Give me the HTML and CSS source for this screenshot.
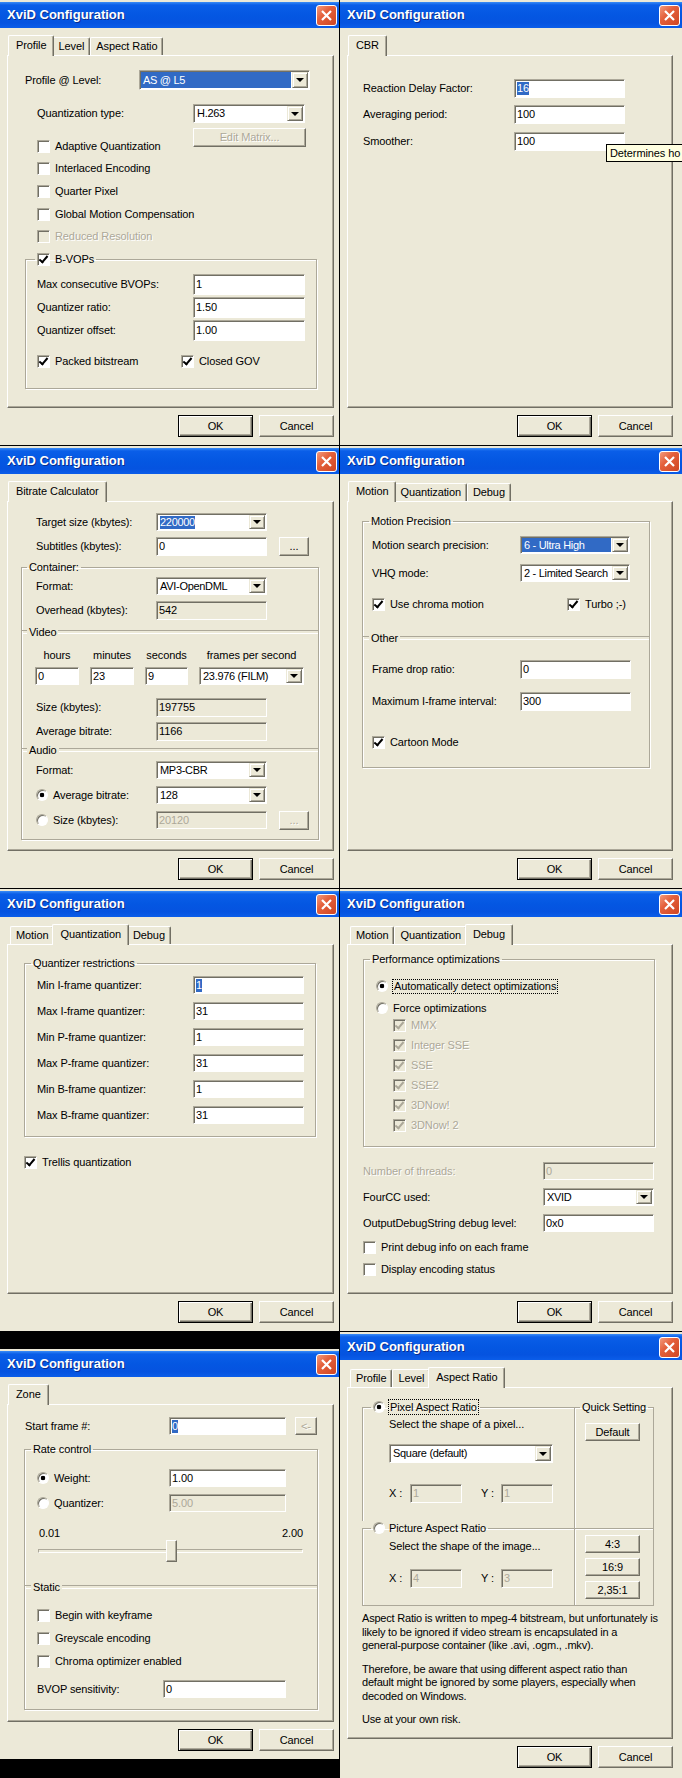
FILE: index.html
```html
<!DOCTYPE html>
<html lang="en">
<head>
    <meta charset="UTF-8">
    <title>XviD Configuration</title>
    <link rel="stylesheet" href="styles.css">
</head>
<body>
<div class="screen">

    <!-- Profile / Level / Aspect Ratio -->
    <div class="win w-profile">
        <div class="title"><span>XviD Configuration</span><span class="close"><svg width="19" height="19" viewBox="0 0 19 19"><path d="M5 5L14 14M14 5L5 14" stroke="#fff" stroke-width="2.2"/></svg></span></div>
        <div class="tabs"><span class="tab on">Profile</span><span class="tab">Level</span><span class="tab">Aspect Ratio</span></div>
        <div class="page">
            <div class="row p-level"><span class="lbl">Profile @ Level:</span><span class="combo hl"><span class="val">AS @ L5</span><span class="drop"></span></span></div>
            <div class="row p-quant"><span class="lbl">Quantization type:</span><span class="combo"><span class="val">H.263</span><span class="drop"></span></span></div>
            <div class="row p-matrix"><span class="chk"><span class="box"></span>Adaptive Quantization</span><span class="btn dis">Edit Matrix...</span></div>
            <div class="chk p-opt tight"><span class="box"></span>Interlaced Encoding</div>
            <div class="chk p-opt"><span class="box"></span>Quarter Pixel</div>
            <div class="chk p-opt"><span class="box"></span>Global Motion Compensation</div>
            <div class="chk p-opt tight dis"><span class="box"></span>Reduced Resolution</div>
            <fieldset class="grp p-bvop">
                <legend><span class="chk"><span class="box on"></span>B-VOPs</span></legend>
                <div class="row p-num first"><span class="lbl">Max consecutive BVOPs:</span><span class="edit">1</span></div>
                <div class="row p-num"><span class="lbl">Quantizer ratio:</span><span class="edit">1.50</span></div>
                <div class="row p-num"><span class="lbl">Quantizer offset:</span><span class="edit">1.00</span></div>
                <div class="row p-pack"><span class="chk"><span class="box on"></span>Packed bitstream</span><span class="chk"><span class="box on"></span>Closed GOV</span></div>
            </fieldset>
        </div>
        <div class="actions"><span class="btn def">OK</span><span class="btn">Cancel</span></div>
    </div>

    <!-- CBR -->
    <div class="win r w-cbr">
        <div class="title"><span>XviD Configuration</span><span class="close"><svg width="19" height="19" viewBox="0 0 19 19"><path d="M5 5L14 14M14 5L5 14" stroke="#fff" stroke-width="2.2"/></svg></span></div>
        <div class="tabs"><span class="tab on">CBR</span></div>
        <div class="page">
            <div class="row c-row first"><span class="lbl">Reaction Delay Factor:</span><span class="edit"><span class="sel">16</span></span></div>
            <div class="row c-row"><span class="lbl">Averaging period:</span><span class="edit">100</span></div>
            <div class="row c-row third"><span class="lbl">Smoother:</span><span class="edit">100</span></div>
        </div>
        <div class="actions"><span class="btn def">OK</span><span class="btn">Cancel</span></div>
        <div class="tip">Determines ho</div>
    </div>

    <!-- Bitrate Calculator -->
    <div class="win w-calc">
        <div class="title"><span>XviD Configuration</span><span class="close"><svg width="19" height="19" viewBox="0 0 19 19"><path d="M5 5L14 14M14 5L5 14" stroke="#fff" stroke-width="2.2"/></svg></span></div>
        <div class="tabs"><span class="tab on">Bitrate Calculator</span></div>
        <div class="page">
            <div class="row b-row b-target"><span class="lbl">Target size (kbytes):</span><span class="combo"><span class="val"><span class="sel">220000</span></span><span class="drop"></span></span></div>
            <div class="row b-row b-sub"><span class="lbl">Subtitles (kbytes):</span><span class="edit">0</span><span class="btn more">...</span></div>
            <fieldset class="grp b-box">
                <legend>Container:</legend>
                <div class="row b-in b-fmt"><span class="lbl">Format:</span><span class="combo"><span class="val">AVI-OpenDML</span><span class="drop"></span></span></div>
                <div class="row b-in b-over"><span class="lbl">Overhead (kbytes):</span><span class="edit ro">542</span></div>
                <div class="sep b-video"><span>Video</span></div>
                <div class="b-time">
                    <span>hours</span><span>minutes</span><span>seconds</span><span>frames per second</span>
                    <span class="edit">0</span><span class="edit">23</span><span class="edit">9</span>
                    <span class="combo"><span class="val">23.976 (FILM)</span><span class="drop"></span></span>
                </div>
                <div class="row b-in b-size"><span class="lbl">Size (kbytes):</span><span class="edit ro">197755</span></div>
                <div class="row b-in b-avg"><span class="lbl">Average bitrate:</span><span class="edit ro">1166</span></div>
                <div class="sep b-audio"><span>Audio</span></div>
                <div class="row b-in b-afmt"><span class="lbl">Format:</span><span class="combo"><span class="val">MP3-CBR</span><span class="drop"></span></span></div>
                <div class="row b-in b-rad"><span class="opt lbl"><span class="radio on"></span>Average bitrate:</span><span class="combo"><span class="val">128</span><span class="drop"></span></span></div>
                <div class="row b-in b-rad"><span class="opt lbl"><span class="radio"></span>Size (kbytes):</span><span class="edit dis">20120</span><span class="btn more dis">...</span></div>
            </fieldset>
        </div>
        <div class="actions"><span class="btn def">OK</span><span class="btn">Cancel</span></div>
    </div>

    <!-- Motion -->
    <div class="win r w-motion">
        <div class="title"><span>XviD Configuration</span><span class="close"><svg width="19" height="19" viewBox="0 0 19 19"><path d="M5 5L14 14M14 5L5 14" stroke="#fff" stroke-width="2.2"/></svg></span></div>
        <div class="tabs"><span class="tab on">Motion</span><span class="tab">Quantization</span><span class="tab">Debug</span></div>
        <div class="page">
            <fieldset class="grp m-box">
                <legend>Motion Precision</legend>
                <div class="row m-row m-prec"><span class="lbl">Motion search precision:</span><span class="combo hl"><span class="val">6 - Ultra High</span><span class="drop"></span></span></div>
                <div class="row m-row m-vhq"><span class="lbl">VHQ mode:</span><span class="combo"><span class="val">2 - Limited Search</span><span class="drop"></span></span></div>
                <div class="row m-row m-chk"><span class="chk"><span class="box on"></span>Use chroma motion</span><span class="chk"><span class="box on"></span>Turbo ;-)</span></div>
                <div class="sep m-other"><span>Other</span></div>
                <div class="row m-row m-drop"><span class="lbl">Frame drop ratio:</span><span class="edit">0</span></div>
                <div class="row m-row m-max"><span class="lbl">Maximum I-frame interval:</span><span class="edit">300</span></div>
                <div class="chk m-row m-cart"><span class="box on"></span>Cartoon Mode</div>
            </fieldset>
        </div>
        <div class="actions"><span class="btn def">OK</span><span class="btn">Cancel</span></div>
    </div>

    <!-- Quantization -->
    <div class="win w-quant">
        <div class="title"><span>XviD Configuration</span><span class="close"><svg width="19" height="19" viewBox="0 0 19 19"><path d="M5 5L14 14M14 5L5 14" stroke="#fff" stroke-width="2.2"/></svg></span></div>
        <div class="tabs"><span class="tab">Motion</span><span class="tab on">Quantization</span><span class="tab">Debug</span></div>
        <div class="page">
            <fieldset class="grp q-box">
                <legend>Quantizer restrictions</legend>
                <div class="row q-row first"><span class="lbl">Min I-frame quantizer:</span><span class="edit"><span class="sel">1</span></span></div>
                <div class="row q-row"><span class="lbl">Max I-frame quantizer:</span><span class="edit">31</span></div>
                <div class="row q-row"><span class="lbl">Min P-frame quantizer:</span><span class="edit">1</span></div>
                <div class="row q-row"><span class="lbl">Max P-frame quantizer:</span><span class="edit">31</span></div>
                <div class="row q-row"><span class="lbl">Min B-frame quantizer:</span><span class="edit">1</span></div>
                <div class="row q-row"><span class="lbl">Max B-frame quantizer:</span><span class="edit">31</span></div>
            </fieldset>
            <div class="chk q-trellis"><span class="box on"></span>Trellis quantization</div>
        </div>
        <div class="actions"><span class="btn def">OK</span><span class="btn">Cancel</span></div>
    </div>

    <!-- Debug -->
    <div class="win r w-debug">
        <div class="title"><span>XviD Configuration</span><span class="close"><svg width="19" height="19" viewBox="0 0 19 19"><path d="M5 5L14 14M14 5L5 14" stroke="#fff" stroke-width="2.2"/></svg></span></div>
        <div class="tabs"><span class="tab">Motion</span><span class="tab">Quantization</span><span class="tab on">Debug</span></div>
        <div class="page">
            <fieldset class="grp d-box">
                <legend>Performance optimizations</legend>
                <div class="opt d-auto"><span class="radio on"></span><span class="focus">Automatically detect optimizations</span></div>
                <div class="opt d-force"><span class="radio"></span>Force optimizations</div>
                <div class="chk dis d-cpu first"><span class="box on"></span>MMX</div>
                <div class="chk dis d-cpu"><span class="box on"></span>Integer SSE</div>
                <div class="chk dis d-cpu"><span class="box on"></span>SSE</div>
                <div class="chk dis d-cpu"><span class="box on"></span>SSE2</div>
                <div class="chk dis d-cpu"><span class="box on"></span>3DNow!</div>
                <div class="chk dis d-cpu"><span class="box on"></span>3DNow! 2</div>
            </fieldset>
            <div class="row d-row d-threads"><span class="lbl dis">Number of threads:</span><span class="edit dis">0</span></div>
            <div class="row d-row d-fourcc"><span class="lbl">FourCC used:</span><span class="combo"><span class="val">XVID</span><span class="drop"></span></span></div>
            <div class="row d-row d-level"><span class="lbl">OutputDebugString debug level:</span><span class="edit">0x0</span></div>
            <div class="chk d-row d-print"><span class="box"></span>Print debug info on each frame</div>
            <div class="chk d-row d-status"><span class="box"></span>Display encoding status</div>
        </div>
        <div class="actions"><span class="btn def">OK</span><span class="btn">Cancel</span></div>
    </div>

    <!-- Zone -->
    <div class="win zone w-zone">
        <div class="title"><span>XviD Configuration</span><span class="close"><svg width="19" height="19" viewBox="0 0 19 19"><path d="M5 5L14 14M14 5L5 14" stroke="#fff" stroke-width="2.2"/></svg></span></div>
        <div class="tabs"><span class="tab on">Zone</span></div>
        <div class="page">
            <div class="row z-start"><span class="lbl">Start frame #:</span><span class="edit"><span class="sel">0</span></span><span class="btn dis z-arrow">&lt;-</span></div>
            <fieldset class="grp z-box">
                <legend>Rate control</legend>
                <div class="row z-row z-weight"><span class="opt lbl"><span class="radio on"></span>Weight:</span><span class="edit">1.00</span></div>
                <div class="row z-row z-qz"><span class="opt lbl"><span class="radio"></span>Quantizer:</span><span class="edit dis">5.00</span></div>
                <div class="z-scale"><span>0.01</span><span>2.00</span></div>
                <div class="slider"><span class="track"></span><span class="thumb"></span></div>
                <div class="sep z-static"><span>Static</span></div>
                <div class="chk z-chk first"><span class="box"></span>Begin with keyframe</div>
                <div class="chk z-chk"><span class="box"></span>Greyscale encoding</div>
                <div class="chk z-chk"><span class="box"></span>Chroma optimizer enabled</div>
                <div class="row z-row z-bvop"><span class="lbl">BVOP sensitivity:</span><span class="edit">0</span></div>
            </fieldset>
        </div>
        <div class="actions"><span class="btn def">OK</span><span class="btn">Cancel</span></div>
    </div>

    <!-- Aspect Ratio -->
    <div class="win r w-aspect">
        <div class="title"><span>XviD Configuration</span><span class="close"><svg width="19" height="19" viewBox="0 0 19 19"><path d="M5 5L14 14M14 5L5 14" stroke="#fff" stroke-width="2.2"/></svg></span></div>
        <div class="tabs"><span class="tab">Profile</span><span class="tab">Level</span><span class="tab on">Aspect Ratio</span></div>
        <div class="page">
            <div class="ar">
                <div class="ar-left">
                    <fieldset class="grp ar-pix">
                        <legend><span class="opt"><span class="radio on"></span><span class="focus">Pixel Aspect Ratio</span></span></legend>
                        <div class="ar-hint">Select the shape of a pixel...</div>
                        <div class="row ar-combo"><span class="combo"><span class="val">Square (default)</span><span class="drop"></span></span></div>
                        <div class="row ar-xy"><span class="lbl">X :</span><span class="edit dis">1</span><span class="lbl ar-y">Y :</span><span class="edit dis">1</span></div>
                    </fieldset>
                    <fieldset class="grp ar-pic">
                        <legend><span class="opt"><span class="radio"></span>Picture Aspect Ratio</span></legend>
                        <div class="ar-hint pic">Select the shape of the image...</div>
                        <div class="row ar-xy pic"><span class="lbl">X :</span><span class="edit dis">4</span><span class="lbl ar-y">Y :</span><span class="edit dis">3</span></div>
                    </fieldset>
                </div>
                <fieldset class="grp ar-quick">
                    <legend>Quick Setting</legend>
                    <span class="btn ar-btn ar-def">Default</span>
                    <div class="ar-line"></div>
                    <span class="btn ar-btn">4:3</span>
                    <span class="btn ar-btn">16:9</span>
                    <span class="btn ar-btn">2,35:1</span>
                </fieldset>
            </div>
            <p class="note">Aspect Ratio is written to mpeg-4 bitstream, but unfortunately is<br>likely to be ignored if video stream is encapsulated in a<br>general-purpose container (like .avi, .ogm., .mkv).</p>
            <p class="note">Therefore, be aware that using different aspect ratio than<br>default might be ignored by some players, especially when<br>decoded on Windows.</p>
            <p class="note">Use at your own risk.</p>
        </div>
        <div class="actions"><span class="btn def">OK</span><span class="btn">Cancel</span></div>
    </div>

</div>
</body>
</html>
```

FILE: styles.css
```css
* {
    box-sizing: border-box;
}
body {
    margin: 0;
    background: #000;
    color: #000;
    font: 11px/13px "Liberation Sans", Arial, sans-serif;
    letter-spacing: -0.1px;
}
.screen {
    display: grid;
    grid-template-columns: 339px 342px;
    grid-template-rows: 445px 442px 442px 446px;
    gap: 1px;
    width: 682px;
    height: 1778px;
}

/* window chrome */
.win {
    --pr: 5px;
    position: relative;
    display: flex;
    flex-direction: column;
    padding: 0 var(--pr) 0 7px;
    background: #ECE9D8;
    overflow: hidden;
}
.win.r {
    --pr: 9px;
}
.win.zone {
    align-self: start;
    height: 410px;
    margin-top: 17px;
}
.title {
    flex: none;
    height: 26px;
    margin: 2px calc(-1 * var(--pr)) 0 -7px;
    padding: 0 2px 0 7px;
    display: flex;
    align-items: center;
    justify-content: space-between;
    background: linear-gradient(#3a8cf6 0, #0a5ee8 3px, #0457e2 50%, #0553e0 80%, #0b5de9 100%);
    color: #fff;
    font: bold 13px/16px "Liberation Sans", Arial, sans-serif;
    letter-spacing: 0;
    text-shadow: 1px 1px 0 #0c2d8c;
}
.close {
    width: 21px;
    height: 21px;
    display: flex;
    align-items: center;
    justify-content: center;
    border: 1px solid #fff;
    border-radius: 3px;
    background: linear-gradient(135deg, #f29a7c 0%, #e4603b 40%, #cf4623 100%);
}

/* tabs */
.tabs {
    flex: none;
    display: flex;
    align-items: flex-end;
    height: 20px;
    margin-top: 7px;
    padding-left: 3px;
}
.tab {
    height: 18px;
    padding: 0 5px 0 5px;
    line-height: 17px;
    white-space: nowrap;
    border: 1px solid;
    border-bottom: 0;
    border-color: #fff #716F64 #fff #fff;
    border-radius: 2px 2px 0 0;
    box-shadow: inset -1px 0 0 #ACA899;
}
.tab.on {
    position: relative;
    z-index: 1;
    height: 21px;
    margin: 0 -2px -1px;
    padding: 0 7px 0 7px;
    line-height: 19px;
    background: #ECE9D8;
}
.page {
    flex: 1;
    display: flex;
    flex-direction: column;
    align-items: flex-start;
    border: 1px solid;
    border-color: #fff #716F64 #716F64 #fff;
    box-shadow: inset -1px -1px 0 #ACA899;
}
.actions {
    flex: none;
    display: flex;
    justify-content: flex-end;
    gap: 6px;
    margin-top: 7px;
    padding-bottom: 8px;
}
.w-aspect .actions {
    padding-bottom: 10px;
}

/* controls */
.btn {
    flex: none;
    width: 75px;
    height: 22px;
    display: flex;
    align-items: center;
    justify-content: center;
    white-space: nowrap;
    border: 1px solid;
    border-color: #fff #716F64 #716F64 #fff;
    box-shadow: inset -1px -1px 0 #ACA899;
}
.btn.def {
    border-color: #000;
    box-shadow: inset 1px 1px 0 #fff, inset -1px -1px 0 #716F64, inset -2px -2px 0 #ACA899;
}
.dis {
    color: #ACA899;
    text-shadow: 1px 1px 0 #fff;
}
.row {
    flex: none;
    display: flex;
    align-items: center;
    height: 18px;
}
.lbl {
    flex: none;
    white-space: nowrap;
}
.edit,
.combo {
    align-self: stretch;
    display: flex;
    align-items: center;
    background: #fff;
    white-space: nowrap;
    overflow: hidden;
    border: 1px solid;
    border-color: #ACA899 #fff #fff #ACA899;
    box-shadow: inset 1px 1px 0 #716F64;
}
.edit {
    padding-left: 2px;
}
.edit.ro {
    background: #ECE9D8;
}
.edit.dis {
    background: #ECE9D8;
    text-shadow: none;
}
.combo .val {
    flex: 1;
    min-width: 0;
    align-self: stretch;
    display: flex;
    align-items: center;
    margin: 1px 0 1px 1px;
    padding-left: 2px;
    letter-spacing: -0.3px;
    overflow: hidden;
}
.combo.hl .val {
    background: #316AC5;
    color: #fff;
}
.sel {
    background: #316AC5;
    color: #fff;
}
.drop {
    flex: none;
    width: 16px;
    align-self: stretch;
    margin: 1px;
    display: flex;
    align-items: center;
    justify-content: center;
    background: #ECE9D8;
    border: 1px solid;
    border-color: #ECE9D8 #716F64 #716F64 #ECE9D8;
    box-shadow: inset 1px 1px 0 #fff, inset -1px -1px 0 #ACA899;
}
.drop::after {
    content: "";
    border-left: 4px solid transparent;
    border-right: 4px solid transparent;
    border-top: 4px solid #000;
}
.chk,
.opt {
    flex: none;
    display: flex;
    align-items: center;
    gap: 5px;
    height: 16px;
    white-space: nowrap;
}
.box {
    flex: none;
    width: 13px;
    height: 13px;
    display: flex;
    align-items: center;
    justify-content: center;
    background: #fff;
    border: 1px solid;
    border-color: #ACA899 #fff #fff #ACA899;
    box-shadow: inset 1px 1px 0 #716F64;
}
.box.on::after {
    content: "";
    width: 3px;
    height: 7px;
    margin-top: -2px;
    border: solid #000;
    border-width: 0 2px 2px 0;
    transform: rotate(40deg);
}
.chk.dis .box {
    background: #ECE9D8;
}
.chk.dis .box.on::after {
    border-color: #ACA899;
}
.radio {
    flex: none;
    width: 12px;
    height: 12px;
    border-radius: 50%;
    background: #fff;
    border: 1px solid;
    border-color: #ACA899 #fff #fff #ACA899;
    box-shadow: inset 1px 1px 0 #716F64;
}
.radio.on {
    background: radial-gradient(circle, #000 0 2px, #fff 2.6px);
}
.focus {
    padding: 0 1px;
    outline: 1px dotted #000;
}

/* group boxes */
.grp {
    flex: none;
    display: flex;
    flex-direction: column;
    align-items: flex-start;
    min-width: 0;
    margin: 0;
    padding: 0;
    border: 1px solid #ACA899;
    box-shadow: inset 1px 1px 0 #fff, 1px 1px 0 #fff;
}
.grp legend {
    margin-left: 6px;
    padding: 0 2px;
    line-height: 14px;
}
.sep {
    --lead: 6px;
    flex: none;
    align-self: stretch;
    display: flex;
    align-items: center;
    height: 14px;
}
.sep::before,
.sep::after {
    content: "";
    height: 2px;
    border-top: 1px solid #ACA899;
    border-bottom: 1px solid #fff;
}
.sep::before {
    width: var(--lead);
}
.sep::after {
    flex: 1;
}
.sep span {
    padding: 0 2px;
}

.tip {
    position: absolute;
    left: 266px;
    top: 144px;
    height: 18px;
    padding: 0 3px;
    line-height: 16px;
    white-space: nowrap;
    background: #FFFFE1;
    border: 1px solid #000;
    border-right: 0;
}

/* profile */
.p-level {
    height: 20px;
    margin: 14px 0 0 17px;
}
.p-level .lbl {
    width: 114px;
}
.p-level .combo {
    width: 171px;
}
.p-quant {
    height: 19px;
    margin: 14px 0 0 29px;
}
.p-quant .lbl {
    width: 156px;
}
.p-quant .combo {
    width: 112px;
}
.p-matrix {
    height: 26px;
    margin: 5px 0 0 29px;
    align-items: flex-start;
}
.p-matrix .chk {
    width: 156px;
    align-self: flex-end;
}
.p-matrix .btn {
    width: 113px;
    height: 19px;
}
.p-opt {
    margin: 7px 0 0 29px;
}
.p-opt.tight {
    margin-top: 6px;
}
.p-bvop {
    width: 292px;
    margin: 7px 0 0 17px;
    padding-bottom: 19px;
}
.p-bvop legend {
    margin-left: 9px;
}
.p-num {
    height: 21px;
    margin: 2px 0 0 11px;
}
.p-num.first {
    margin-top: 7px;
}
.p-num .lbl {
    width: 156px;
}
.p-num .edit {
    width: 112px;
}
.p-pack {
    height: 16px;
    margin: 12px 0 0 11px;
}
.p-pack .chk:first-child {
    width: 144px;
}

/* cbr */
.c-row {
    height: 19px;
    margin: 7px 0 0 15px;
}
.c-row.first {
    margin-top: 23px;
}
.c-row.third {
    margin-top: 8px;
}
.c-row .lbl {
    width: 151px;
}
.c-row .edit {
    width: 111px;
}

/* bitrate calculator */
.b-row {
    margin-left: 28px;
}
.b-row .lbl,
.b-in .lbl {
    width: 120px;
}
.b-row .edit,
.b-row .combo,
.b-in .edit,
.b-in .combo {
    width: 111px;
}
.b-target {
    margin-top: 11px;
}
.b-sub {
    height: 19px;
    margin-top: 6px;
}
.btn.more {
    width: 30px;
    height: 19px;
    margin-left: 12px;
}
.b-box {
    width: 298px;
    margin: 4px 0 0 13px;
    padding-bottom: 10px;
}
.b-box legend {
    margin-left: 5px;
}
.b-in {
    margin-left: 14px;
}
.b-fmt {
    margin-top: 3px;
}
.b-over {
    height: 19px;
    margin-top: 6px;
}
.b-box .sep {
    --lead: 5px;
}
.b-video {
    margin-top: 5px;
}
.b-time {
    display: grid;
    grid-template-columns: 44px 44px 43px 105px;
    grid-template-rows: 13px 18px;
    column-gap: 11px;
    row-gap: 5px;
    justify-items: center;
    margin: 10px 0 0 13px;
}
.b-time .edit,
.b-time .combo {
    justify-self: stretch;
}
.b-size {
    height: 19px;
    margin-top: 13px;
}
.b-avg {
    height: 19px;
    margin-top: 5px;
}
.b-audio {
    margin-top: 2px;
}
.b-afmt {
    margin-top: 4px;
}
.b-rad {
    margin-top: 7px;
}

/* motion */
.m-box {
    width: 288px;
    margin: 12px 0 0 14px;
    padding-bottom: 17px;
}
.m-row {
    margin-left: 9px;
}
.m-row .lbl {
    width: 148px;
}
.m-row .combo {
    width: 110px;
}
.m-row .edit {
    width: 111px;
}
.m-prec {
    margin-top: 8px;
}
.m-vhq {
    margin-top: 10px;
}
.m-chk {
    height: 16px;
    margin-top: 14px;
}
.m-chk .chk:first-child {
    width: 195px;
}
.m-other {
    margin-top: 19px;
}
.m-drop {
    height: 19px;
    margin-top: 15px;
}
.m-max {
    height: 19px;
    margin-top: 13px;
}
.m-cart {
    margin-top: 23px;
}

/* quantization */
.q-box {
    width: 292px;
    margin: 11px 0 0 16px;
    padding-bottom: 12px;
}
.q-row {
    margin: 8px 0 0 12px;
}
.q-row.first {
    margin-top: 6px;
}
.q-row .lbl {
    width: 156px;
}
.q-row .edit {
    width: 111px;
}
.q-trellis {
    margin: 17px 0 0 16px;
}

/* debug */
.d-box {
    width: 292px;
    margin: 7px 0 0 15px;
    padding-bottom: 13px;
}
.d-auto {
    margin: 12px 0 0 12px;
}
.d-force {
    margin: 6px 0 0 12px;
}
.d-cpu {
    margin: 4px 0 0 29px;
}
.d-cpu.first {
    margin-top: 1px;
}
.d-row {
    margin-left: 15px;
}
.d-row .lbl {
    width: 180px;
}
.d-row .edit,
.d-row .combo {
    width: 111px;
}
.d-threads {
    margin-top: 15px;
}
.d-fourcc,
.d-level {
    margin-top: 8px;
}
.d-print {
    margin-top: 7px;
}
.d-status {
    margin-top: 6px;
}

/* zone */
.z-start {
    margin: 12px 0 0 17px;
}
.z-start .lbl {
    width: 144px;
}
.z-start .edit {
    width: 117px;
}
.z-arrow {
    width: 22px;
    height: 18px;
    margin-left: 9px;
}
.z-box {
    width: 294px;
    margin: 7px 0 0 16px;
    padding-bottom: 11px;
}
.z-row {
    margin-left: 12px;
}
.z-row .edit {
    width: 117px;
}
.z-weight {
    margin-top: 13px;
}
.z-weight .lbl,
.z-qz .lbl {
    width: 132px;
}
.z-qz {
    margin-top: 7px;
}
.z-scale {
    display: flex;
    justify-content: space-between;
    width: 264px;
    margin: 15px 0 0 14px;
}
.slider {
    display: grid;
    width: 265px;
    height: 22px;
    margin-left: 13px;
}
.slider > * {
    grid-area: 1 / 1;
}
.track {
    align-self: center;
    height: 4px;
    border: 1px solid;
    border-color: #ACA899 #fff #fff #ACA899;
}
.thumb {
    width: 11px;
    height: 22px;
    margin-left: 128px;
    background: #ECE9D8;
    border: 1px solid;
    border-color: #fff #716F64 #716F64 #fff;
    box-shadow: inset -1px -1px 0 #ACA899;
}
.z-static {
    margin-top: 18px;
}
.z-chk {
    margin: 7px 0 0 12px;
}
.z-chk.first {
    margin-top: 13px;
}
.z-bvop {
    margin-top: 11px;
}
.z-bvop .lbl {
    width: 126px;
}
.z-bvop .edit {
    width: 123px;
}

/* aspect ratio */
.ar {
    display: grid;
    grid-template-columns: 212px 80px;
    margin: 12px 0 0 14px;
}
.ar-left {
    display: flex;
    flex-direction: column;
}
.ar .grp {
    box-shadow: inset 1px 1px 0 #fff;
}
.ar legend .opt {
    height: 14px;
    gap: 4px;
}
.ar-pix {
    border-width: 1px 0 0 1px;
    padding-bottom: 18px;
}
.ar-pix legend,
.ar-pic legend {
    margin-left: 8px;
}
.ar-pic {
    flex: 1;
    border-width: 1px 0 1px 1px;
    padding-bottom: 17px;
}
.ar-hint {
    margin: 4px 0 0 26px;
    white-space: nowrap;
}
.ar-hint.pic {
    margin-top: 5px;
}
.ar-combo {
    height: 19px;
    margin: 13px 0 0 26px;
}
.ar-combo .combo {
    width: 164px;
}
.ar-xy {
    height: 19px;
    margin: 21px 0 0 26px;
}
.ar-xy.pic {
    margin-top: 16px;
}
.ar-xy .lbl {
    width: 21px;
}
.ar-xy .edit {
    width: 52px;
}
.ar-xy .ar-y {
    width: 20px;
    margin-left: 19px;
}
.ar-quick {
    padding-bottom: 6px;
}
.ar-quick legend {
    margin-left: 5px;
}
.ar-btn {
    width: 55px;
    height: 18px;
    margin: 5px 0 0 10px;
}
.ar-def {
    margin-top: 9px;
}
.ar-line {
    align-self: stretch;
    height: 2px;
    margin-top: 87px;
    border-top: 1px solid #ACA899;
    border-bottom: 1px solid #fff;
}
.note {
    margin: 10px 0 0 14px;
    line-height: 13.5px;
    letter-spacing: -0.2px;
    white-space: nowrap;
}
.ar + .note {
    margin-top: 6px;
}
```
